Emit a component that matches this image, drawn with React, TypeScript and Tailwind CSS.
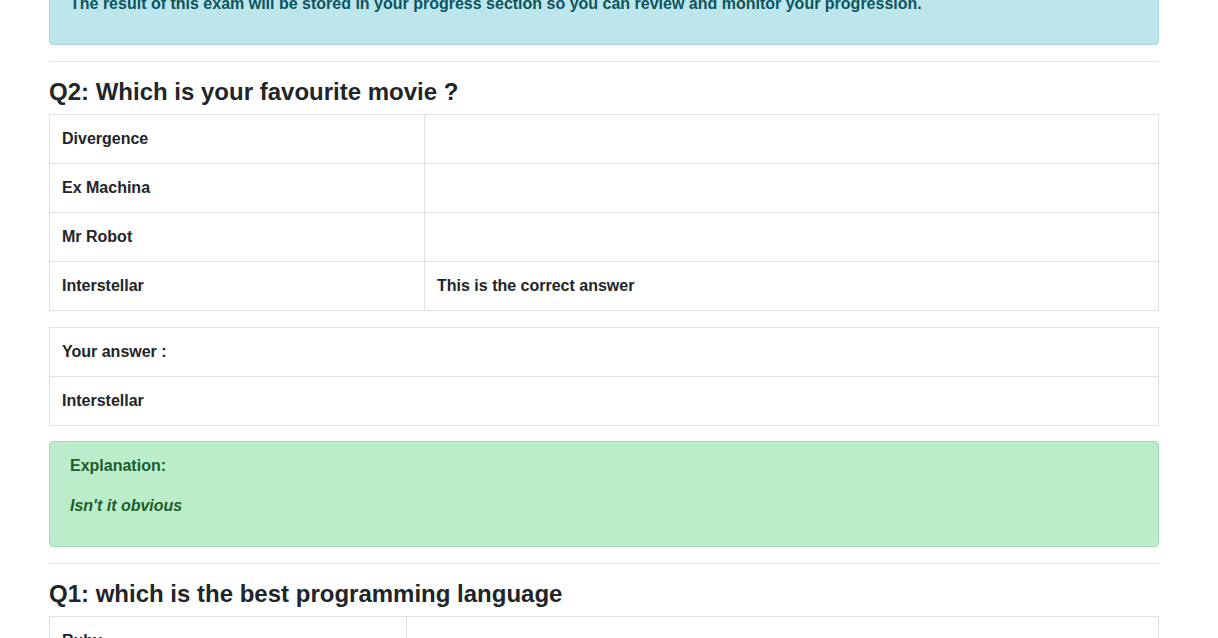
const questions = [
  {
    id: 2,
    title: "Q2: Which is your favourite movie ?",
    firstCol: "w-[375px]",
    options: [
      { label: "Divergence", note: "" },
      { label: "Ex Machina", note: "" },
      { label: "Mr Robot", note: "" },
      { label: "Interstellar", note: "This is the correct answer" },
    ],
    answer: "Interstellar",
    explanation: "Isn't it obvious",
  },
  {
    id: 1,
    title: "Q1: which is the best programming language",
    firstCol: "w-[357px]",
    options: [
      { label: "Ruby", note: "" },
      { label: "Python", note: "" },
      { label: "Javascript", note: "This is the correct answer" },
    ],
    answer: "Javascript",
    explanation: "Because it runs everywhere",
  },
];

function QuestionBlock({ q }: { q: (typeof questions)[number] }) {
  return (
    <div>
      <hr className="my-4 border-t border-[#e5e5e5]" />
      <h3 className="mb-2 text-[24px] leading-[28px] font-bold">{q.title}</h3>

      {/* Options */}
      <div className="mb-4 border border-[#dee2e6]">
        {q.options.map((opt, i) => (
          <div
            key={opt.label}
            className={`flex ${i < q.options.length - 1 ? "border-b border-[#dee2e6]" : ""}`}
          >
            <div className={`${q.firstCol} shrink-0 border-r border-[#dee2e6] p-3`}>{opt.label}</div>
            <div className="flex-1 p-3">{opt.note}</div>
          </div>
        ))}
      </div>

      {/* Your answer */}
      <div className="mb-[15px] border border-[#dee2e6]">
        <div className="border-b border-[#dee2e6] p-3">Your answer :</div>
        <div className="p-3">{q.answer}</div>
      </div>

      {/* Explanation */}
      <div className="mb-4 rounded border border-[#a3d9b3] bg-[#bbedcb] px-5 py-3 text-[#1b5e2c]">
        <p className="mb-4">Explanation:</p>
        <p className="mb-4 italic">{q.explanation}</p>
      </div>
    </div>
  );
}

export default function App() {
  return (
    <div
      className="min-h-screen bg-white text-[16px] leading-6 font-bold text-[#212529]"
      style={{ fontFamily: '"Liberation Sans", Arial, sans-serif' }}
    >
      <div className="w-[1110px] ml-[49px] overflow-hidden">
        <div className="-mt-[21px] mb-4 rounded border border-[#a6d5dc] bg-[#bce6eb] px-5 py-3 text-[#0c5460]">
          <p className="mb-4">
            The result of this exam will be stored in your progress section so you can review and monitor your progression.
          </p>
        </div>

        {questions.map((q) => (
          <QuestionBlock key={q.id} q={q} />
        ))}
      </div>
    </div>
  );
}
